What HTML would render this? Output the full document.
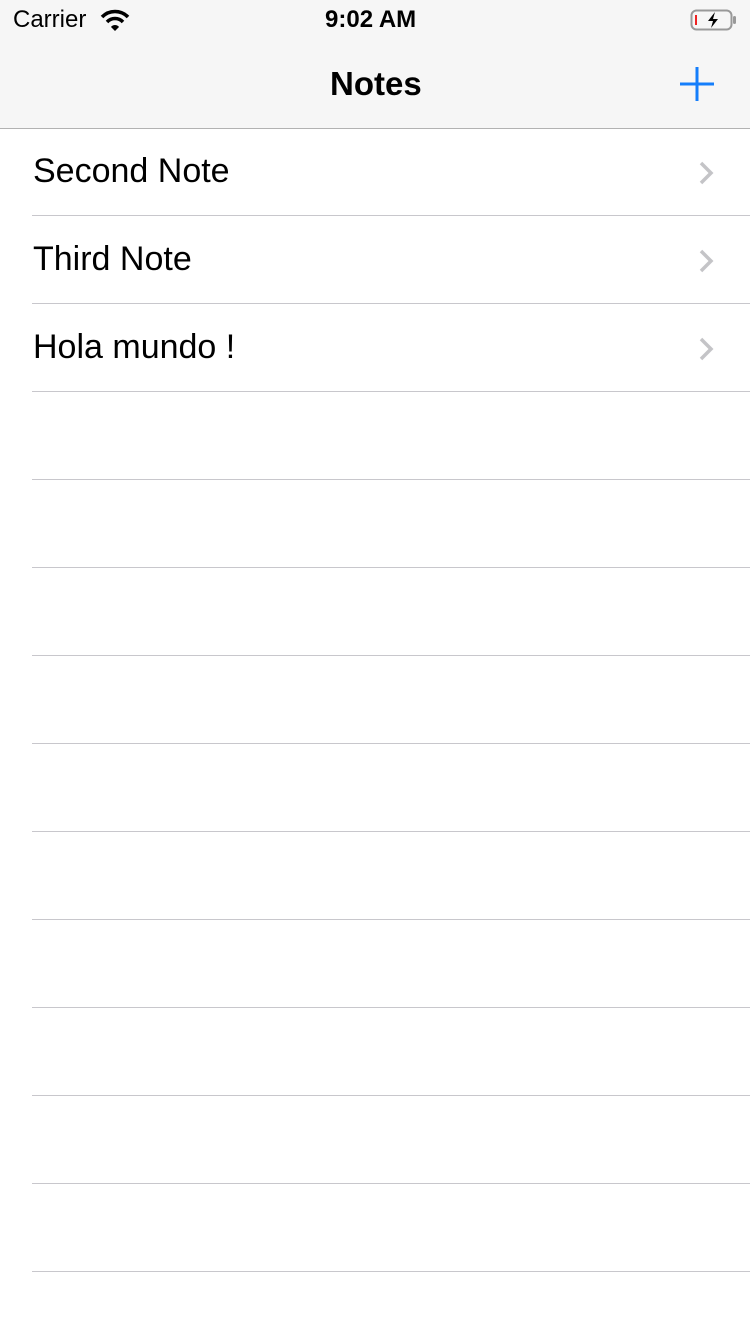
<!DOCTYPE html>
<html><head><meta charset="utf-8"><style>
body{margin:0;width:750px;height:1334px;background:#fff;font-family:"Liberation Sans",sans-serif;position:relative;overflow:hidden}
.hdr{position:absolute;left:0;top:0;width:750px;height:128px;background:#f6f6f6;border-bottom:1px solid #b2b2b2}
.t{position:absolute;white-space:nowrap}
.sep{position:absolute;left:32px;right:0;height:1px;background:#c8c7cc}
.row{position:absolute;left:33px;font-size:34px;color:#000}
.chev{position:absolute;left:698px}
</style></head><body>
<div class="hdr">
<div class="t" style="left:13px;top:6px;font-size:24px">Carrier</div>
<svg style="position:absolute;left:99px;top:8px" width="32" height="24" viewBox="0 0 32 24"><path d="M3 9a18 18 0 0 1 26 0" stroke="#000" stroke-width="3.5" fill="none"/><path d="M8 14a11 11 0 0 1 16 0" stroke="#000" stroke-width="3.5" fill="none"/><path d="M12 19l4 4 4-4a5 5 0 0 0-8 0z" fill="#000"/></svg>
<div class="t" style="left:325px;top:6px;font-size:24px;font-weight:bold">9:02 AM</div>
<svg style="position:absolute;left:690px;top:8px" width="48" height="24" viewBox="0 0 48 24"><rect x="1.5" y="2.5" width="40" height="19" rx="5" fill="none" stroke="#999" stroke-width="2"/><rect x="43" y="8" width="3" height="8" rx="1.5" fill="#999"/><rect x="5" y="7" width="2" height="10" fill="#e22"/><path d="M25 4l-7 9h5l-2 7 7-9h-5z" fill="#000"/></svg>
<div class="t" style="left:330px;top:65px;font-size:33px;font-weight:bold">Notes</div>
<svg style="position:absolute;left:678px;top:65px" width="38" height="38"><path d="M19 2v34M2 19h34" stroke="#157efb" stroke-width="3"/></svg>
</div>
<div class="row" style="top:152px">Second Note</div>
<div class="row" style="top:240px">Third Note</div>
<div class="row" style="top:328px">Hola mundo !</div>
<svg class="chev" style="top:160px" width="20" height="26"><path d="M3 3l10 10-10 10" stroke="#c4c4c7" stroke-width="3.5" fill="none"/></svg>
<svg class="chev" style="top:248px" width="20" height="26"><path d="M3 3l10 10-10 10" stroke="#c4c4c7" stroke-width="3.5" fill="none"/></svg>
<svg class="chev" style="top:336px" width="20" height="26"><path d="M3 3l10 10-10 10" stroke="#c4c4c7" stroke-width="3.5" fill="none"/></svg>
<div class="sep" style="top:215px"></div><div class="sep" style="top:303px"></div><div class="sep" style="top:391px"></div><div class="sep" style="top:479px"></div><div class="sep" style="top:567px"></div><div class="sep" style="top:655px"></div><div class="sep" style="top:743px"></div><div class="sep" style="top:831px"></div><div class="sep" style="top:919px"></div><div class="sep" style="top:1007px"></div><div class="sep" style="top:1095px"></div><div class="sep" style="top:1183px"></div><div class="sep" style="top:1271px"></div>
</body></html>
